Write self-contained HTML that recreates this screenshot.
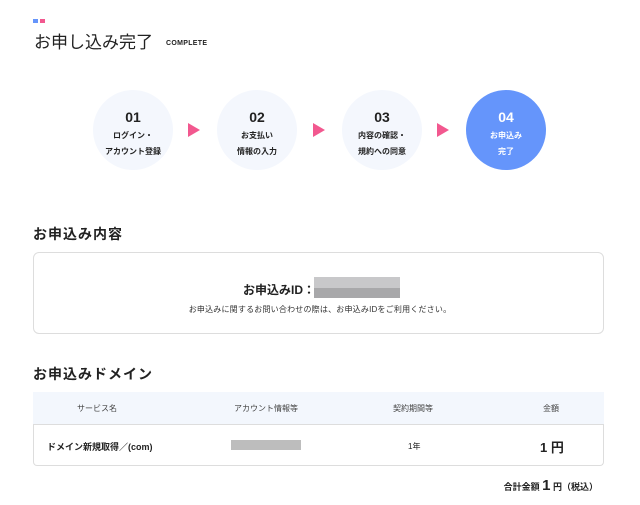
<!DOCTYPE html>
<html><head><meta charset="utf-8"><style>
*{margin:0;padding:0;box-sizing:border-box}
body{width:640px;height:505px;background:#fff;font-family:"Liberation Sans","Noto Sans CJK JP",sans-serif;color:#222;position:relative;overflow:hidden}
.a{position:absolute}
.c{position:absolute;width:80px;height:80px;border-radius:50%;background:#f4f7fd;text-align:center;font-weight:bold;font-size:8px;line-height:16px;color:#222}
.c b{display:block;font-size:14px;line-height:18px;margin-top:18px;margin-bottom:2px}
.c.on{background:#6595fb;color:#fff}
.tri{position:absolute;width:0;height:0;border-top:7px solid transparent;border-bottom:7px solid transparent;border-left:12px solid #f2588f}
h2{position:absolute;font-size:14px;font-weight:bold;letter-spacing:1px}
.px{position:absolute}
</style></head><body>
<div class="a" style="left:33px;top:19px;width:5px;height:4px;background:#6595fb"></div>
<div class="a" style="left:40px;top:19px;width:5px;height:4px;background:#f2588f"></div>
<div class="a" style="left:34px;top:32px;font-size:17px;line-height:22px">お申し込み完了</div>
<div class="a" style="left:166px;top:40px;font-size:7px;font-weight:bold;letter-spacing:0.3px">COMPLETE</div>

<div class="c" style="left:93px;top:90px"><b>01</b>ログイン・<br>アカウント登録</div>
<div class="tri" style="left:188px;top:123px"></div>
<div class="c" style="left:217px;top:90px"><b>02</b>お支払い<br>情報の入力</div>
<div class="tri" style="left:313px;top:123px"></div>
<div class="c" style="left:342px;top:90px"><b>03</b>内容の確認・<br>規約への同意</div>
<div class="tri" style="left:437px;top:123px"></div>
<div class="c on" style="left:466px;top:90px"><b>04</b>お申込み<br>完了</div>

<h2 style="left:33px;top:224px">お申込み内容</h2>
<div class="a" style="left:33px;top:252px;width:571px;height:82px;border:1px solid #ddd;border-radius:6px"></div>
<div class="a" style="left:243px;top:281px;font-size:12px;font-weight:bold">お申込みID：</div>
<div class="px" style="left:314px;top:277px;width:86px;height:11px;background:#c8c8ca"></div>
<div class="px" style="left:314px;top:288px;width:86px;height:10px;background:#a8a8aa"></div>
<div class="a" style="left:0;width:640px;top:304px;text-align:center;font-size:8px;color:#333;letter-spacing:0.2px">お申込みに関するお問い合わせの際は、お申込みIDをご利用ください。</div>

<h2 style="left:33px;top:364px">お申込みドメイン</h2>
<div class="a" style="left:33px;top:392px;width:571px;height:33px;background:#f3f7fd;border-bottom:1px solid #ddd"></div>
<div class="a" style="left:33px;top:424px;width:571px;height:42px;border:1px solid #ddd;border-top:none;border-radius:0 0 4px 4px"></div>
<div class="a" style="left:77px;top:403px;font-size:8px;color:#444">サービス名</div>
<div class="a" style="left:234px;top:403px;font-size:8px;color:#444">アカウント情報等</div>
<div class="a" style="left:393px;top:403px;font-size:8px;color:#444">契約期間等</div>
<div class="a" style="left:543px;top:403px;font-size:8px;color:#444">金額</div>
<div class="a" style="left:47px;top:440px;font-size:9px;font-weight:bold">ドメイン新規取得／(com)</div>
<div class="px" style="left:231px;top:440px;width:70px;height:10px;background:#bdbdbd"></div>
<div class="a" style="left:408px;top:441px;font-size:8px">1年</div>
<div class="a" style="left:540px;top:437px;font-size:13px;font-weight:bold">1 円</div>
<div class="a" style="right:42px;top:477px;font-size:9px;font-weight:bold;white-space:nowrap">合計金額 <span style="font-size:15px">1</span> 円（税込）</div>
</body></html>
